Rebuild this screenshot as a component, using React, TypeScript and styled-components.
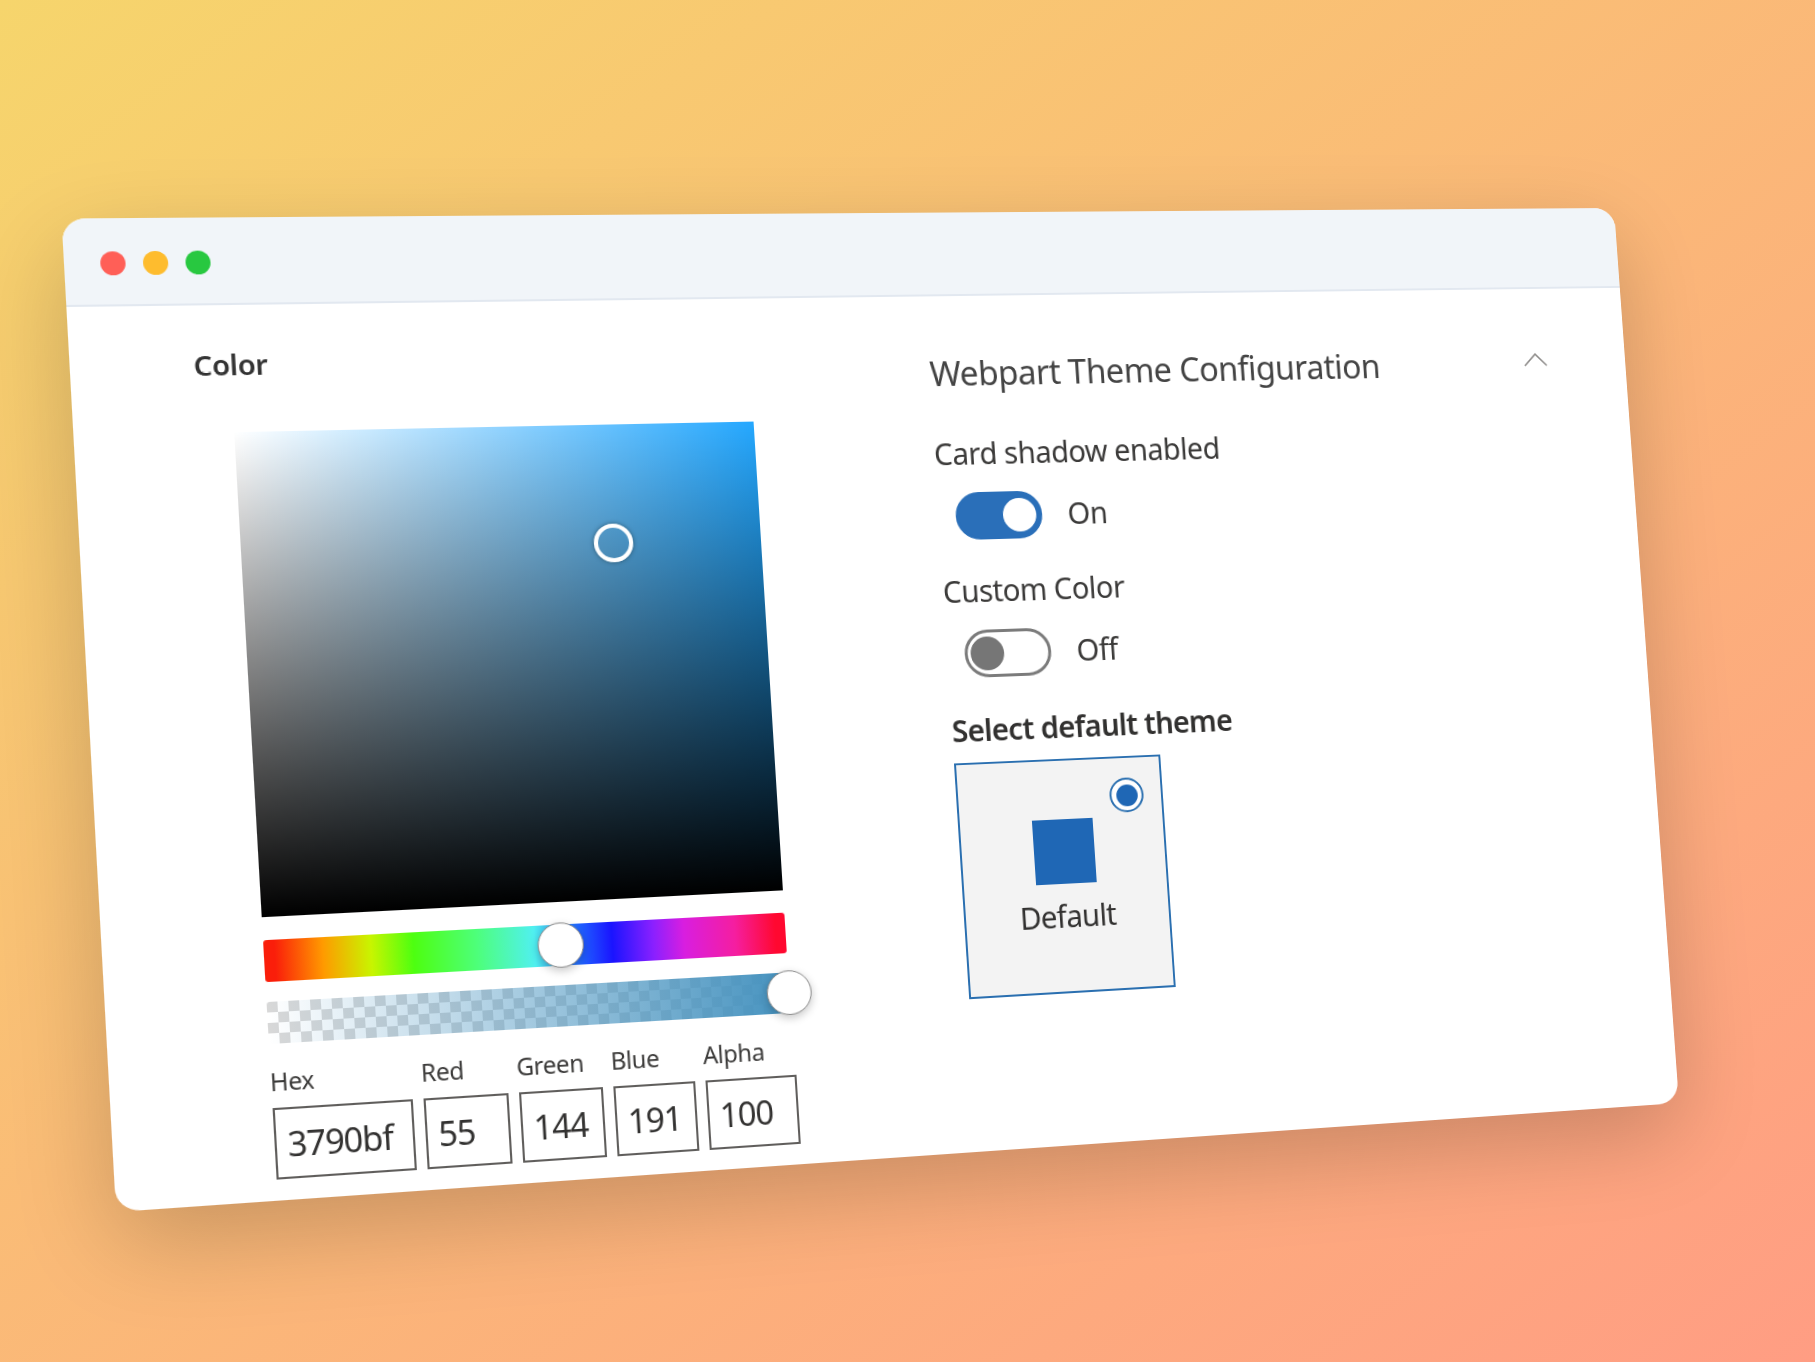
import React from 'react';
import styled, { createGlobalStyle } from 'styled-components';

const WINDOW_W = 1560;
const WINDOW_H = 944;

// maps the flat window onto the tilted quad of the screenshot
const quadMatrix = (
  [x0, y0]: number[],
  [x1, y1]: number[],
  [x2, y2]: number[],
  [x3, y3]: number[]
) => {
  const dx1 = x1 - x2;
  const dx2 = x3 - x2;
  const dy1 = y1 - y2;
  const dy2 = y3 - y2;
  const sx = x0 - x1 + x2 - x3;
  const sy = y0 - y1 + y2 - y3;
  const det = dx1 * dy2 - dx2 * dy1;
  const g = (sx * dy2 - dx2 * sy) / det;
  const h = (dx1 * sy - sx * dy1) / det;
  const a = x1 - x0 + g * x1;
  const b = x3 - x0 + h * x3;
  const d = y1 - y0 + g * y1;
  const e = y3 - y0 + h * y3;
  return [
    a / WINDOW_W, d / WINDOW_W, 0, g / WINDOW_W,
    b / WINDOW_H, e / WINDOW_H, 0, h / WINDOW_H,
    0, 0, 1, 0,
    x0, y0, 0, 1,
  ].join(',');
};

const TILT = quadMatrix([61.5, 218.5], [1614, 208], [1679, 1103], [116, 1212]);

const GlobalStyle = createGlobalStyle`
  html, body {
    margin: 0;
    padding: 0;
  }
  body {
    font-family: "Noto Sans", "Open Sans", sans-serif;
    color: #323130;
  }
`;

const Stage = styled.div`
  width: 1815px;
  height: 1362px;
  overflow: hidden;
  background: linear-gradient(to bottom right, #f6d56c, #ff9d83);
`;

const Window = styled.div`
  width: ${WINDOW_W}px;
  height: ${WINDOW_H}px;
  display: flex;
  flex-direction: column;
  background: #fff;
  border-radius: 22px;
  box-shadow: 0 30px 90px rgba(0, 0, 0, 0.2);
  transform-origin: 0 0;
  transform: matrix3d(${TILT});
`;

const TitleBar = styled.div`
  height: 85px;
  box-sizing: border-box;
  flex: none;
  display: flex;
  align-items: center;
  gap: 16px;
  padding: 0 0 0 33px;
  background: #f1f5f9;
  border-bottom: 2px solid #e2e8f0;
  border-radius: 22px 22px 0 0;
`;

const Dot = styled.span<{ $color: string }>`
  width: 23px;
  height: 23px;
  border-radius: 50%;
  background: ${(p) => p.$color};
  margin-top: 3px;
`;

const Body = styled.div`
  flex: 1;
  display: grid;
  grid-template-columns: 708px 653px;
  padding: 39px 0 0 113px;
`;

const ColorColumn = styled.div`
  display: flex;
  flex-direction: column;
`;

const ColorTitle = styled.div`
  margin-top: 1px;
  font-size: 27px;
  line-height: 36px;
  letter-spacing: -0.3px;
  font-weight: 600;
  color: #333;
`;

const Picker = styled.div`
  width: 500px;
  margin: 47px 0 0 34px;
  display: flex;
  flex-direction: column;
`;

const SaturationBox = styled.div`
  position: relative;
  width: 496px;
  height: 466px;
  background: linear-gradient(to top, #000, rgba(0, 0, 0, 0)),
    linear-gradient(to right, #fff, rgba(255, 255, 255, 0)), #25a8ff;
`;

const SaturationThumb = styled.span`
  position: absolute;
  left: 71%;
  top: 25%;
  width: 38px;
  height: 38px;
  box-sizing: border-box;
  border: 4px solid #fff;
  border-radius: 50%;
  transform: translate(-50%, -50%);
  box-shadow: 0 0 4px rgba(20, 40, 50, 0.55);
`;

const SliderTrack = styled.div<{ $top: number; $height: number }>`
  position: relative;
  width: 496px;
  height: ${(p) => p.$height}px;
  margin-top: ${(p) => p.$top}px;
  border-radius: 3px;
`;

const HueTrack = styled(SliderTrack)`
  background: linear-gradient(
    to right,
    #fa1e0a 0%,
    #fa1e0a 2%,
    #ff9a00 11%,
    #c8f500 20%,
    #4dff10 28%,
    #4dff7a 40%,
    #50f0f0 51%,
    #2060ff 60%,
    #1a14ff 66%,
    #8a20ff 74%,
    #d81ee0 80%,
    #f51ea0 90%,
    #ff0830 98%,
    #ff0830 100%
  );
`;

const AlphaTrack = styled(SliderTrack)`
  background: linear-gradient(to right, rgba(74, 148, 191, 0), #4592bf),
    repeating-conic-gradient(#fff 0 25%, #d8d8d8 0 50%) 0 0 / 20px 20px;
`;

const SliderThumb = styled.span<{ $at: number }>`
  position: absolute;
  left: ${(p) => p.$at}%;
  top: 50%;
  width: 44px;
  height: 44px;
  box-sizing: border-box;
  border-radius: 50%;
  background: #fff;
  border: 1.5px solid #8d8d8d;
  transform: translate(-50%, -50%);
  box-shadow: 0 3px 8px rgba(0, 0, 0, 0.22);
`;

const Fields = styled.div`
  display: flex;
  gap: 10px;
  margin-top: 21px;
`;

const Field = styled.div<{ $width: number }>`
  width: ${(p) => p.$width}px;
  display: flex;
  flex-direction: column;
  gap: 10px;
`;

const FieldLabel = styled.label`
  font-size: 23px;
  line-height: 30px;
  letter-spacing: -0.4px;
  margin-left: -1px;
  color: #3b3a39;
`;

const FieldBox = styled.div`
  height: 68px;
  box-sizing: border-box;
  display: flex;
  align-items: center;
  padding-left: 10px;
  border: 2px solid #605e5c;
  font-size: 32px;
  letter-spacing: -1.1px;
  color: #323130;
`;

const ThemeColumn = styled.div`
  padding-top: 14px;
  display: flex;
  flex-direction: column;
  align-items: flex-start;
`;

const SectionHeader = styled.div`
  width: 100%;
  height: 44px;
  display: flex;
  align-items: center;
  justify-content: space-between;
`;

const SectionTitle = styled.div`
  margin: 5px 0 0 1px;
  font-size: 34px;
  line-height: 44px;
  letter-spacing: -0.6px;
  color: #444;
`;

const ChevronIcon = styled.svg`
  width: 26px;
  height: 15px;
  flex: none;
  margin-bottom: 2px;
  fill: none;
  stroke: #8a8886;
  stroke-width: 1.6;
`;

const OptionLabel = styled.div<{ $strong?: boolean; $top: number }>`
  font-size: 30px;
  line-height: 38px;
  letter-spacing: ${(p) => (p.$strong ? -0.75 : -0.55)}px;
  margin-top: ${(p) => p.$top}px;
  font-weight: ${(p) => (p.$strong ? 600 : 400)};
  color: ${(p) => (p.$strong ? '#323130' : '#3b3a39')};
`;

const ToggleRow = styled.div`
  display: flex;
  align-items: center;
  gap: 26px;
  margin: 20px 0 0 18px;
  font-size: 30px;
  letter-spacing: -0.5px;
  line-height: 48px;
  color: #3b3a39;
`;

const ToggleTrack = styled.div<{ $on: boolean }>`
  width: 88px;
  height: 48px;
  box-sizing: border-box;
  display: flex;
  align-items: center;
  justify-content: ${(p) => (p.$on ? 'flex-end' : 'flex-start')};
  padding: 0 3px;
  border-radius: 24px;
  border: 3px solid ${(p) => (p.$on ? '#2a6fb9' : '#7b7b7b')};
  background: ${(p) => (p.$on ? '#2a6fb9' : '#fff')};
`;

const ToggleKnob = styled.span<{ $on: boolean }>`
  width: 34px;
  height: 34px;
  border-radius: 50%;
  background: ${(p) => (p.$on ? '#fff' : '#767676')};
`;

const ThemeCard = styled.div`
  position: relative;
  width: 211px;
  height: 236px;
  box-sizing: border-box;
  margin: 13px 0 0 0;
  padding-top: 59px;
  display: flex;
  flex-direction: column;
  align-items: center;
  background: #f3f3f3;
  border: 2px solid #2a6fb0;
`;

const Swatch = styled.div`
  width: 62px;
  height: 65px;
  background: #1f67b5;
`;

const ThemeName = styled.div`
  margin-top: 14px;
  font-size: 30px;
  line-height: 38px;
  letter-spacing: -0.7px;
  color: #323130;
`;

const RadioMark = styled.span`
  position: absolute;
  top: 20px;
  right: 18px;
  width: 35px;
  height: 35px;
  box-sizing: border-box;
  border: 2px solid #2a6fb0;
  border-radius: 50%;
  background: #fff;
  display: flex;
  align-items: center;
  justify-content: center;
  &::after {
    content: '';
    width: 22px;
    height: 22px;
    border-radius: 50%;
    background: #1f67b5;
  }
`;

const rgbFields = [
  { label: 'Hex', value: '3790bf', width: 130 },
  { label: 'Red', value: '55', width: 80 },
  { label: 'Green', value: '144', width: 80 },
  { label: 'Blue', value: '191', width: 79 },
  { label: 'Alpha', value: '100', width: 89 },
];

const App = () => {
  return (
    <Stage>
      <GlobalStyle />
      <Window>
        <TitleBar>
          <Dot $color="#ff5f57" />
          <Dot $color="#febc2e" />
          <Dot $color="#28c840" />
        </TitleBar>
        <Body>
          <ColorColumn>
            <ColorTitle>Color</ColorTitle>
            <Picker>
              <SaturationBox>
                <SaturationThumb />
              </SaturationBox>
              <HueTrack $top={22} $height={40}>
                <SliderThumb $at={56} />
              </HueTrack>
              <AlphaTrack $top={19} $height={40}>
                <SliderThumb $at={100} />
              </AlphaTrack>
              <Fields>
                {rgbFields.map((field) => (
                  <Field key={field.label} $width={field.width}>
                    <FieldLabel>{field.label}</FieldLabel>
                    <FieldBox>{field.value}</FieldBox>
                  </Field>
                ))}
              </Fields>
            </Picker>
          </ColorColumn>
          <ThemeColumn>
            <SectionHeader>
              <SectionTitle>Webpart Theme Configuration</SectionTitle>
              <ChevronIcon viewBox="0 0 26 15">
                <polyline points="1,14 13,2 25,14" />
              </ChevronIcon>
            </SectionHeader>
            <OptionLabel $top={44}>Card shadow enabled</OptionLabel>
            <ToggleRow>
              <ToggleTrack $on>
                <ToggleKnob $on />
              </ToggleTrack>
              On
            </ToggleRow>
            <OptionLabel $top={33}>Custom Color</OptionLabel>
            <ToggleRow>
              <ToggleTrack $on={false}>
                <ToggleKnob $on={false} />
              </ToggleTrack>
              Off
            </ToggleRow>
            <OptionLabel $strong $top={34}>
              Select default theme
            </OptionLabel>
            <ThemeCard>
              <RadioMark />
              <Swatch />
              <ThemeName>Default</ThemeName>
            </ThemeCard>
          </ThemeColumn>
        </Body>
      </Window>
    </Stage>
  );
};

export default App;
